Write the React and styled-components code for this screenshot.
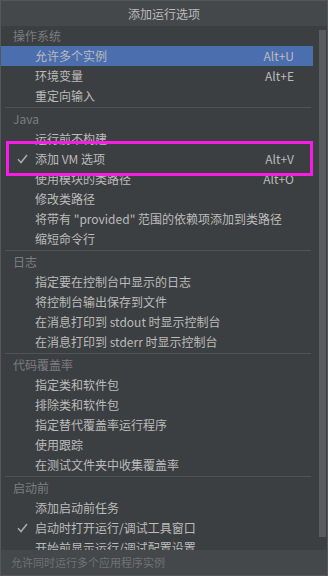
import React from "react"
import styled, { createGlobalStyle } from "styled-components"

const GlobalStyle = createGlobalStyle`
  html, body {
    margin: 0;
    padding: 0;
    background: #3c3f41;
  }
  body {
    font-family: "Noto Sans CJK SC", "Liberation Sans", sans-serif;
  }
`

const Popup = styled.div`
  position: relative;
  width: 328px;
  height: 576px;
  box-sizing: border-box;
  border: 1px solid #555759;
  background: #3c3f41;
  display: flex;
  flex-direction: column;
  overflow: hidden;
`

const TitleBar = styled.div`
  height: 25px;
  flex: none;
  background: #45484a;
  color: #bbbbbb;
  font-size: 12px;
  line-height: 25px;
  text-align: center;
`

const Body = styled.div`
  flex: 1;
  min-height: 0;
  display: flex;
  overflow: hidden;
`

const List = styled.div`
  width: 312px;
  flex: none;
`

const ScrollTrack = styled.div`
  flex: 1;
  display: flex;
  justify-content: center;
  padding-top: 4px;
`

const ScrollThumb = styled.div`
  width: 7px;
  height: 507px;
  margin-left: 4px;
  background: #595b5d;
`

const Separator = styled.div`
  height: 1px;
  margin: 1px 0 1px 4px;
  width: 306px;
  background: #515355;
`

const Header = styled.div`
  height: 20px;
  line-height: 20px;
  padding-left: 12px;
  font-size: 12px;
  color: #7b7d80;
`

const Row = styled.div`
  height: 20px;
  display: flex;
  align-items: center;
  padding-left: 34px;
  padding-right: 19px;
  font-size: 12px;
  color: #bbbbbb;
  background: ${(p) => (p.selected ? "#4b6eaf" : "transparent")};
  position: relative;
  white-space: nowrap;
`

const Label = styled.span`
  flex: 1;
  line-height: 20px;
`

const Shortcut = styled.span`
  line-height: 20px;
  font-family: "Noto Sans CJK SC", "Liberation Sans", sans-serif;
`

const Check = styled.svg`
  position: absolute;
  left: 16px;
  top: 5px;
`

const Footer = styled.div`
  height: 25px;
  flex: none;
  background: #45484a;
  color: #6f7274;
  font-size: 11px;
  line-height: 25px;
  padding-left: 10px;
`

const Highlight = styled.div`
  position: absolute;
  left: 5px;
  top: 140px;
  width: 307px;
  height: 35px;
  box-sizing: border-box;
  border: 3px solid #f81ce5;
  pointer-events: none;
`

const sections = [
  {
    title: "操作系统",
    items: [
      { label: "允许多个实例", key: "Alt+U", selected: true },
      { label: "环境变量", key: "Alt+E" },
      { label: "重定向输入" },
    ],
  },
  {
    title: "Java",
    items: [
      { label: "运行前不构建" },
      { label: "添加 VM 选项", key: "Alt+V", checked: true },
      { label: "使用模块的类路径", key: "Alt+O" },
      { label: "修改类路径" },
      { label: '将带有 "provided" 范围的依赖项添加到类路径' },
      { label: "缩短命令行" },
    ],
  },
  {
    title: "日志",
    items: [
      { label: "指定要在控制台中显示的日志" },
      { label: "将控制台输出保存到文件" },
      { label: "在消息打印到 stdout 时显示控制台" },
      { label: "在消息打印到 stderr 时显示控制台" },
    ],
  },
  {
    title: "代码覆盖率",
    items: [
      { label: "指定类和软件包" },
      { label: "排除类和软件包" },
      { label: "指定替代覆盖率运行程序" },
      { label: "使用跟踪" },
      { label: "在测试文件夹中收集覆盖率" },
    ],
  },
  {
    title: "启动前",
    items: [
      { label: "添加启动前任务" },
      { label: "启动时打开运行/调试工具窗口", checked: true },
      { label: "开始前显示运行/调试配置设置" },
    ],
  },
]

function CheckMark() {
  return (
    <Check width="11" height="10" viewBox="0 0 11 10">
      <path d="M1 5.2 L4 8.5 L10 1" fill="none" stroke="#a9abad" strokeWidth="1.5" />
    </Check>
  )
}

export default function App() {
  return (
    <>
      <GlobalStyle />
      <Popup>
        <TitleBar>添加运行选项</TitleBar>
        <Body>
          <List>
            {sections.map((section, i) => (
              <div key={section.title}>
                {i > 0 && <Separator />}
                <Header>{section.title}</Header>
                {section.items.map((item) => (
                  <Row key={item.label} selected={item.selected}>
                    {item.checked && <CheckMark />}
                    <Label>{item.label}</Label>
                    {item.key && <Shortcut>{item.key}</Shortcut>}
                  </Row>
                ))}
              </div>
            ))}
          </List>
          <ScrollTrack>
            <ScrollThumb />
          </ScrollTrack>
        </Body>
        <Footer>允许同时运行多个应用程序实例</Footer>
        <Highlight />
      </Popup>
    </>
  )
}
